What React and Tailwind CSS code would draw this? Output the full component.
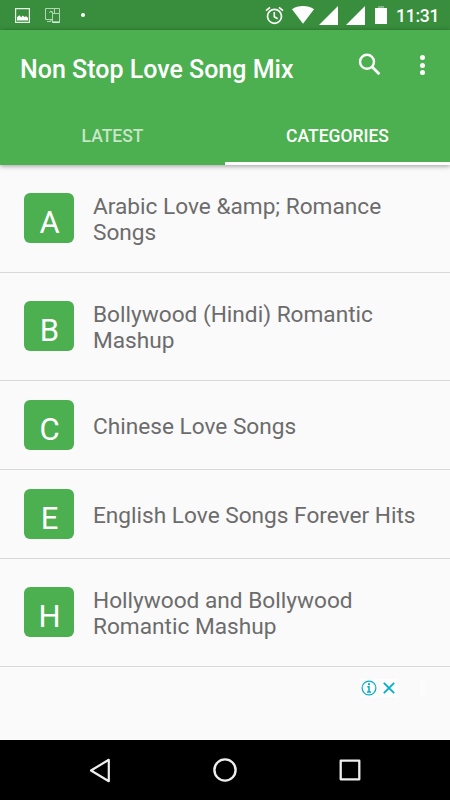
import React from 'react'

const categories = [
    { letter: 'A', name: 'Arabic Love &amp; Romance Songs', tall: true },
    { letter: 'B', name: 'Bollywood (Hindi) Romantic Mashup', tall: true },
    { letter: 'C', name: 'Chinese Love Songs' },
    { letter: 'E', name: 'English Love Songs Forever Hits' },
    { letter: 'H', name: 'Hollywood and Bollywood Romantic Mashup', tall: true },
]

const StatusBar = () => (
    <div className="h-[30px] bg-[#388e3c] flex items-center justify-between pl-[15px] pr-[11px]">
        <div className="flex items-center">
            <svg width="15" height="15" viewBox="0 0 15 15">
                <path d="M.6.6h13.8v13.8H.6z" fill="none" stroke="#e4f1e4" strokeWidth="1.2" />
                <path d="M2 12.6V9.2l2.4-2 1.8 2 1.7-1.6L9.5 9l1.5-.8 2 1.6v2.8z" fill="#fff" />
            </svg>
            <svg width="16" height="15" viewBox="0 0 16 15" fill="none" stroke="#b5d6b6" strokeWidth="1" className="ml-[15px]">
                <path d="M7 11.5H.5V.5h14v5M7.5 5.5h7v9h-7zM7.5 5.5v-2M9.5.5v5" />
                <path d="M4.5 5c0-1.5 1-1.5 2.5-1.5M5 3l2 1.5M2 13.5h4v-2" />
                <path d="M7.5 14h7" stroke="#fff" />
            </svg>
            <span className="ml-[20px] size-[4px] rounded-full bg-white" />
        </div>
        <div className="flex items-center">
            <svg width="19" height="19" viewBox="0 0 19 19" fill="none" stroke="#fff" className="mr-[8px]">
                <circle cx="9.5" cy="10.3" r="7" strokeWidth="1.7" />
                <path d="M9.3 6v4.8l3.3 2M1 4.7l4-3.4M18 4.7l-4-3.4" strokeWidth="1.6" />
            </svg>
            <svg width="22" height="18" viewBox="0 0 22 18" className="mr-[5px]">
                <path d="M0 3.3C6-1.1 16-1.1 22 3.3L11 17.8z" fill="#fff" />
            </svg>
            <svg width="19" height="19" viewBox="0 0 19 19" className="mr-[8px]">
                <path d="M0 19 19 0v19z" fill="#fff" />
            </svg>
            <svg width="20" height="19" viewBox="0 0 20 19" className="mr-[9px]">
                <path d="M0 19 19 0v19z" fill="#fff" />
            </svg>
            <svg width="12" height="18" viewBox="0 0 12 18" className="mr-[9px]">
                <path d="M3 0h6v2H3z" fill="#7fb581" />
                <path d="M0 2h12v16H0z" fill="#fff" />
            </svg>
            <span className="w-[43px] text-[17.6px] leading-[20px] tracking-[-0.3px] font-medium text-white mt-[2px]">11:31</span>
        </div>
    </div>
)

const Toolbar = () => (
    <div className="h-[75px] flex items-start justify-between pl-[20px] pr-[25px]">
        <h1 className="pt-[25px] text-[25px] leading-[30px] font-medium text-white whitespace-nowrap">Non Stop Love Song Mix</h1>
        <div className="flex items-start">
            <button className="mt-[23px] mr-[39px]">
                <svg width="23" height="23" viewBox="0 0 23 23" fill="none" stroke="#fff" className="block">
                    <circle cx="9" cy="8.8" r="7" strokeWidth="2.4" />
                    <path d="m14 13.8 7.4 7.4" strokeWidth="2.8" />
                </svg>
            </button>
            <button className="mt-[25px] flex flex-col gap-[2.5px]">
                <span className="size-[5px] rounded-full bg-white" />
                <span className="size-[5px] rounded-full bg-white" />
                <span className="size-[5px] rounded-full bg-white" />
            </button>
        </div>
    </div>
)

const Tabs = () => (
    <div className="h-[60px] grid grid-cols-2 text-[17.5px] leading-[20px] font-medium text-center">
        <button className="text-white/70 pt-[1px]">LATEST</button>
        <button className="text-white border-b-3 border-white pt-[4px]">CATEGORIES</button>
    </div>
)

const CategoryRow = ({ category }) => (
    <li className={`flex items-center border-b border-[#d9d9d9] px-[24px] ${category.tall ? 'h-[108px]' : 'h-[89px]'}`}>
        <div className={`size-[50px] shrink-0 rounded-[6px] bg-[#4caf50] flex items-center justify-center pt-[9px] pl-[1px] text-[31px] leading-none text-white ${category.tall ? 'mb-[1px]' : ''}`}>
            {category.letter}
        </div>
        <p className={`ml-[19px] text-[22.65px] leading-[26px] text-[#6c6c6c] ${category.tall ? 'pt-[2px]' : 'pt-[4px]'}`}>{category.name}</p>
    </li>
)

const App = () => {
    return (
        <div className="w-[450px] h-[800px] overflow-hidden flex flex-col bg-[#fafafa] font-['Roboto',sans-serif]">
            <StatusBar />
            <header className="relative bg-[#4caf50] shadow-[0_1px_5px_rgba(0,0,0,0.4)]">
                <Toolbar />
                <Tabs />
            </header>

            <ul>
                {categories.map((category) => (
                    <CategoryRow key={category.letter} category={category} />
                ))}
            </ul>

            <div className="flex-1 flex items-start justify-end gap-[2px] pt-[12px] pr-[24px]">
                <span className="flex items-center justify-center bg-[#fefefe] w-[18px] h-[18px]">
                    <svg width="16" height="16" viewBox="0 0 16 16" fill="none" stroke="#00aecd">
                        <circle cx="8" cy="8" r="6.9" strokeWidth="1.2" />
                        <path d="M8 3.2v1.8" strokeWidth="2" />
                        <path d="M6.3 6.7H8v5M6 12h4" strokeWidth="1.5" />
                    </svg>
                </span>
                <span className="flex items-center justify-center bg-[#fefefe] w-[18px] h-[18px]">
                    <svg width="12" height="12" viewBox="0 0 12 12" stroke="#00aecd" strokeWidth="1.8">
                        <path d="m.8.8 10.4 10.4M11.2.8.8 11.2" />
                    </svg>
                </span>
                <span className="ml-[20px] w-[6px] h-[18px] bg-[#fcfcfc]" />
            </div>

            <nav className="h-[60px] bg-black grid grid-cols-[200px_50px_200px] items-center">
                <svg width="22" height="25" viewBox="0 0 22 25" fill="none" stroke="#eee" strokeWidth="2.2" strokeLinejoin="round" className="ml-[89px]">
                    <path d="M19.8 1.8v21.4L2 12.5z" />
                </svg>
                <svg width="24" height="24" viewBox="0 0 24 24" fill="none" stroke="#eee" strokeWidth="2.4" className="ml-[13px]">
                    <circle cx="12" cy="12" r="10.6" />
                </svg>
                <svg width="22" height="22" viewBox="0 0 22 22" fill="none" stroke="#eee" strokeWidth="2.3" strokeLinejoin="round" className="ml-[89px]">
                    <path d="M1.7 1.7h18.6v18.6H1.7z" />
                </svg>
            </nav>
        </div>
    )
}

export default App
